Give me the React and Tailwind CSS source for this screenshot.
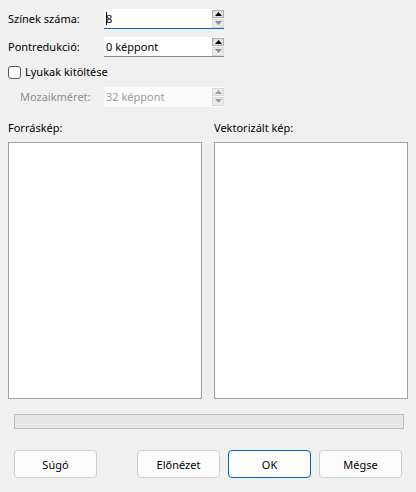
import React from "react";

function Spin({ disabled }) {
  const arrow = disabled ? "#a0a0a0" : "#000";
  return (
    <div className="flex flex-col gap-[1px] w-[12px] h-[18px] shrink-0">
      <div className={`flex-1 flex items-center justify-center border ${disabled ? "border-[#d8d8d8] bg-[#ececec]" : "border-[#adadad] bg-[#e1e1e1]"}`}>
        <svg width="7" height="4" viewBox="0 0 7 4"><polygon points="0,4 7,4 3.5,0" fill={arrow} /></svg>
      </div>
      <div className={`flex-1 flex items-center justify-center border ${disabled ? "border-[#d8d8d8] bg-[#ececec]" : "border-[#dcdcdc] bg-[#e8e8e8]"}`}>
        <svg width="7" height="4" viewBox="0 0 7 4"><polygon points="0,0 7,0 3.5,4" fill={disabled ? "#a0a0a0" : "#8c8c8c"} /></svg>
      </div>
    </div>
  );
}

function SpinInput({ value, focused, disabled, caret }) {
  return (
    <div
      className={`w-[120px] h-[20px] flex items-center pl-[2px] pr-[0px] border-b ${
        disabled ? "bg-[#fbfbfb] border-transparent" : focused ? "bg-white border-[#0067c0]" : "bg-white border-[#8a8a8a]"
      }`}
    >
      <div className={`flex-1 flex items-center leading-[18px] ${disabled ? "text-[#9a9a9a]" : "text-black"}`}>
        {caret && <span className="inline-block w-[1px] h-[13px] bg-black mr-[-1px]" />}
        <span>{value}</span>
      </div>
      <Spin disabled={disabled} />
    </div>
  );
}

function Btn({ children, primary }) {
  return (
    <button
      className={`w-[83px] h-[28px] rounded-[4px] border bg-[#fdfdfd] text-black leading-none flex items-center justify-center ${
        primary ? "border-[#0067c0]" : "border-[#d0d0d0]"
      }`}
    >
      {children}
    </button>
  );
}

export default function App() {
  return (
    <div
      className="w-[416px] h-[492px] bg-[#f0f0f0] text-[11px] text-black flex flex-col overflow-hidden"
      style={{ fontFamily: '"Noto Sans", "Segoe UI", sans-serif' }}
    >
      <div className="pl-[8px] pt-[9px] flex flex-col">
        <div className="flex items-center h-[20px]">
          <span className="w-[96px]">Színek száma:</span>
          <SpinInput value="8" focused caret />
        </div>
        <div className="flex items-center h-[20px] mt-[8px]">
          <span className="w-[96px]">Pontredukció:</span>
          <SpinInput value="0 képpont" />
        </div>
        <div className="flex items-center h-[20px] mt-[5px]">
          <span className="w-[13px] h-[13px] rounded-[3px] border border-[#5a5a5a] bg-white mr-[4px]" />
          <span>Lyukak kitöltése</span>
        </div>
        <div className="flex items-center h-[20px] mt-[5px]">
          <span className="w-[96px] pl-[12px] text-[#8f8f8f]">Mozaikméret:</span>
          <SpinInput value="32 képpont" disabled />
        </div>
      </div>

      <div className="px-[8px] mt-[11px] grid grid-cols-2 gap-x-[12px]">
        <div className="flex flex-col">
          <span className="h-[20px] leading-[20px]">Forráskép:</span>
          <div className="mt-[4px] h-[257px] bg-white border border-[#a0a0a0]" />
        </div>
        <div className="flex flex-col">
          <span className="h-[20px] leading-[20px]">Vektorizált kép:</span>
          <div className="mt-[4px] h-[257px] bg-white border border-[#a0a0a0]" />
        </div>
      </div>

      <div className="mx-[14px] mr-[12px] mt-[15px] h-[15px] bg-[#e6e6e6] border border-[#bcbcbc]" />

      <div className="flex items-center mt-[21px] pl-[14px] pr-[14px]">
        <Btn>Súgó</Btn>
        <div className="flex-1" />
        <div className="flex gap-[8px]">
          <Btn>Előnézet</Btn>
          <Btn primary>OK</Btn>
          <Btn>Mégse</Btn>
        </div>
      </div>
    </div>
  );
}
